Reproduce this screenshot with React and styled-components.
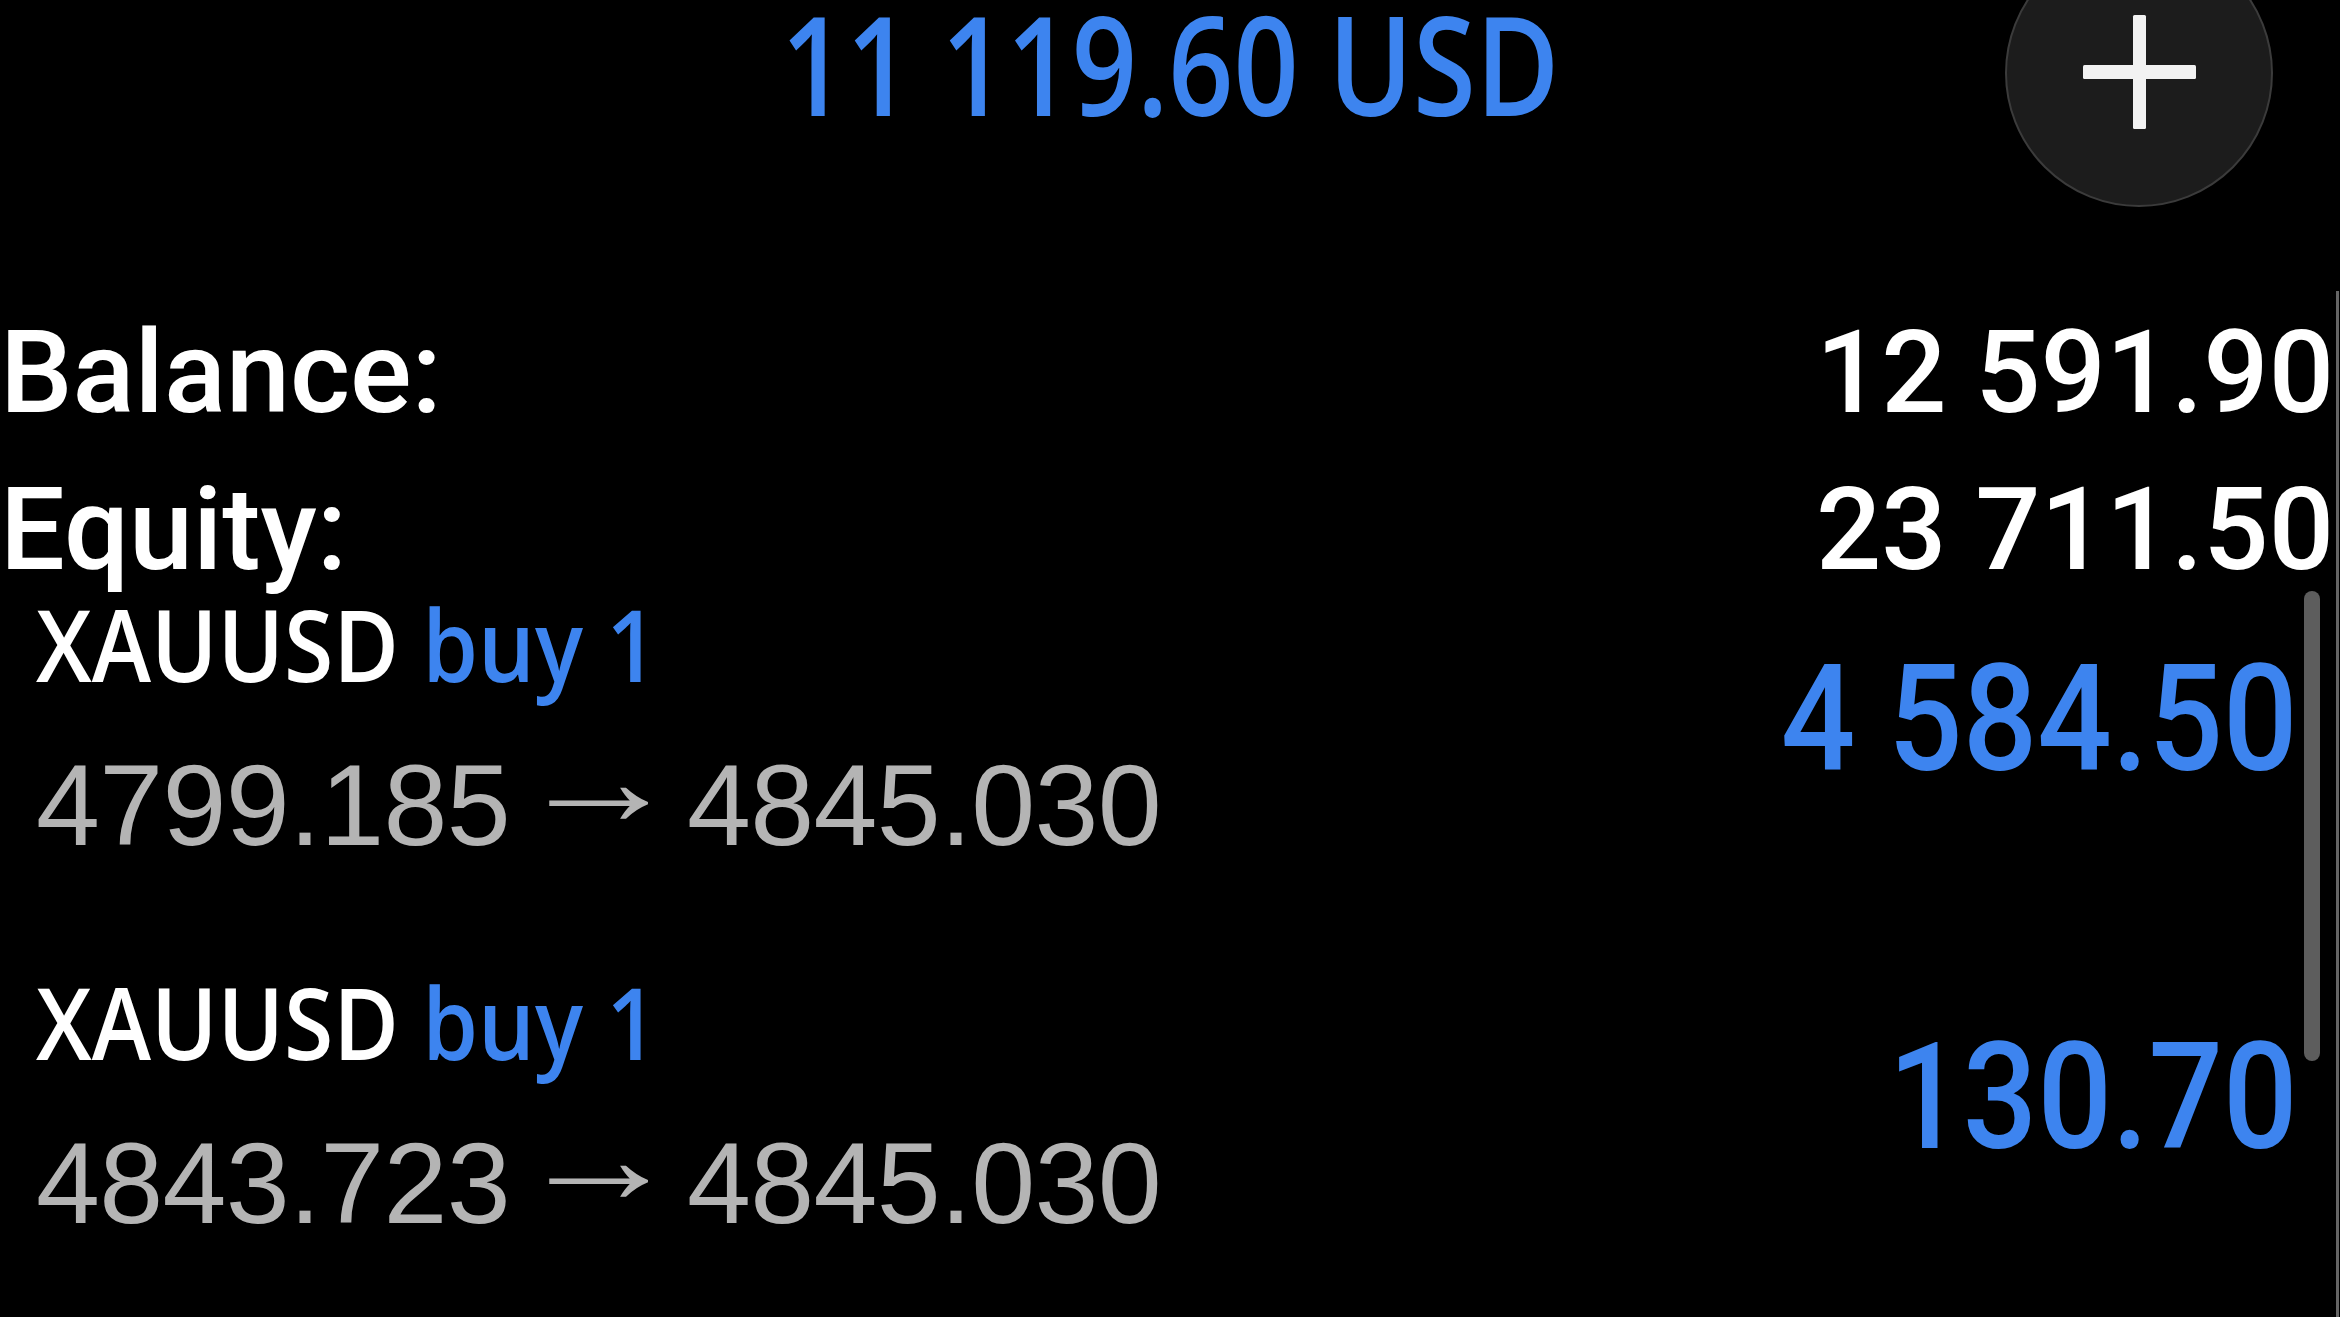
import React from "react";
import styled, { createGlobalStyle } from "styled-components";

const BLUE = "#3d84ef";

const GlobalStyle = createGlobalStyle`
  html, body {
    margin: 0;
    padding: 0;
    background: #000;
  }
  body {
    overflow: hidden;
  }
`;

const Screen = styled.div`
  width: 2340px;
  height: 1317px;
  background: #000;
  overflow: hidden;
  display: flex;
  flex-direction: column;
`;

// top bar: account total in the middle, round add button on the right
const Header = styled.header`
  display: grid;
  grid-template-columns: 1fr auto 1fr;
  align-items: start;
`;

const Total = styled.div`
  grid-column: 2;
  font-family: "Open Sans", "Liberation Sans", sans-serif;
  font-weight: 600;
  font-size: 137px;
  line-height: 126px;
  color: ${BLUE};
  white-space: nowrap;
  transform: scaleX(0.833);
`;

const AddButton = styled.button`
  grid-column: 3;
  justify-self: end;
  width: 268px;
  height: 268px;
  margin: -61px 67px 0 0;
  padding: 0 0 3px;
  border-radius: 50%;
  background: #1c1c1c;
  border: 2px solid #3b3b3b;
  display: flex;
  align-items: center;
  justify-content: center;
  cursor: pointer;
`;

const Body = styled.main`
  flex: 1;
  margin: 84px 1px 0 0;
  border-right: 3px solid #656565;
  display: flex;
  flex-direction: column;
`;

const Summary = styled.section`
  padding: 22px 2px 0 0;
  display: flex;
  flex-direction: column;
  gap: 37px;
`;

const SummaryRow = styled.div`
  display: flex;
  justify-content: space-between;
  font-family: Roboto, "Liberation Sans", sans-serif;
  font-weight: 500;
  font-size: 115px;
  line-height: 120px;
  color: #fff;
`;

const TradeList = styled.section`
  position: relative;
  padding: 0 38px 0 36px;
`;

const TradeRow = styled.div`
  display: flex;
  align-items: flex-start;
  padding-bottom: 93px;
`;

const TradeInfo = styled.div`
  display: flex;
  flex-direction: column;
`;

const Symbol = styled.div`
  font-family: "Open Sans", "Liberation Sans", sans-serif;
  font-weight: 600;
  font-size: 100px;
  line-height: 106px;
  color: #fff;
  white-space: nowrap;
  transform: scaleX(0.896);
  transform-origin: left center;
`;

const Side = styled.span`
  color: ${BLUE};
`;

const Prices = styled.div`
  margin-top: 39px;
  font-family: "Liberation Sans", Arial, sans-serif;
  font-size: 115px;
  line-height: 140px;
  letter-spacing: -0.7px;
  color: #b4b4b4;
  white-space: nowrap;
`;

// thin long arrow between open and current price
const Arrow = styled.span`
  display: inline-block;
  transform: translateY(-26px) scale(1.45, 1.15);
`;

const Profit = styled.div`
  margin: 56px 0 0 auto;
  font-family: Roboto, "Liberation Sans", sans-serif;
  font-weight: 500;
  font-size: 148px;
  line-height: 148px;
  color: ${BLUE};
  white-space: nowrap;
  transform: scaleX(0.887);
  transform-origin: right center;
`;

const ScrollThumb = styled.div`
  position: absolute;
  top: 1px;
  right: 16px;
  width: 16px;
  height: 470px;
  border-radius: 8px;
  background: #5d5d5d;
`;

const trades = [
  { symbol: "XAUUSD", side: "buy 1", open: "4799.185", current: "4845.030", profit: "4 584.50" },
  { symbol: "XAUUSD", side: "buy 1", open: "4843.723", current: "4845.030", profit: "130.70" },
];

function PlusIcon() {
  return (
    <svg width="113" height="114" viewBox="0 0 113 114">
      <rect x="50" y="0" width="13" height="114" rx="1.5" fill="#f2f2f2" />
      <rect x="0" y="50" width="113" height="14" rx="1.5" fill="#f2f2f2" />
    </svg>
  );
}

export default function App() {
  return (
    <>
      <GlobalStyle />
      <Screen>
        <Header>
          <Total>11 119.60 USD</Total>
          <AddButton aria-label="New order">
            <PlusIcon />
          </AddButton>
        </Header>
        <Body>
          <Summary>
            <SummaryRow>
              <span>Balance:</span>
              <span>12 591.90</span>
            </SummaryRow>
            <SummaryRow>
              <span>Equity:</span>
              <span>23 711.50</span>
            </SummaryRow>
          </Summary>
          <TradeList>
            {trades.map((t, idx) => (
              <TradeRow key={idx}>
                <TradeInfo>
                  <Symbol>
                    {t.symbol} <Side>{t.side}</Side>
                  </Symbol>
                  <Prices>
                    {t.open} <Arrow>→</Arrow> {t.current}
                  </Prices>
                </TradeInfo>
                <Profit>{t.profit}</Profit>
              </TradeRow>
            ))}
            <ScrollThumb />
          </TradeList>
        </Body>
      </Screen>
    </>
  );
}
